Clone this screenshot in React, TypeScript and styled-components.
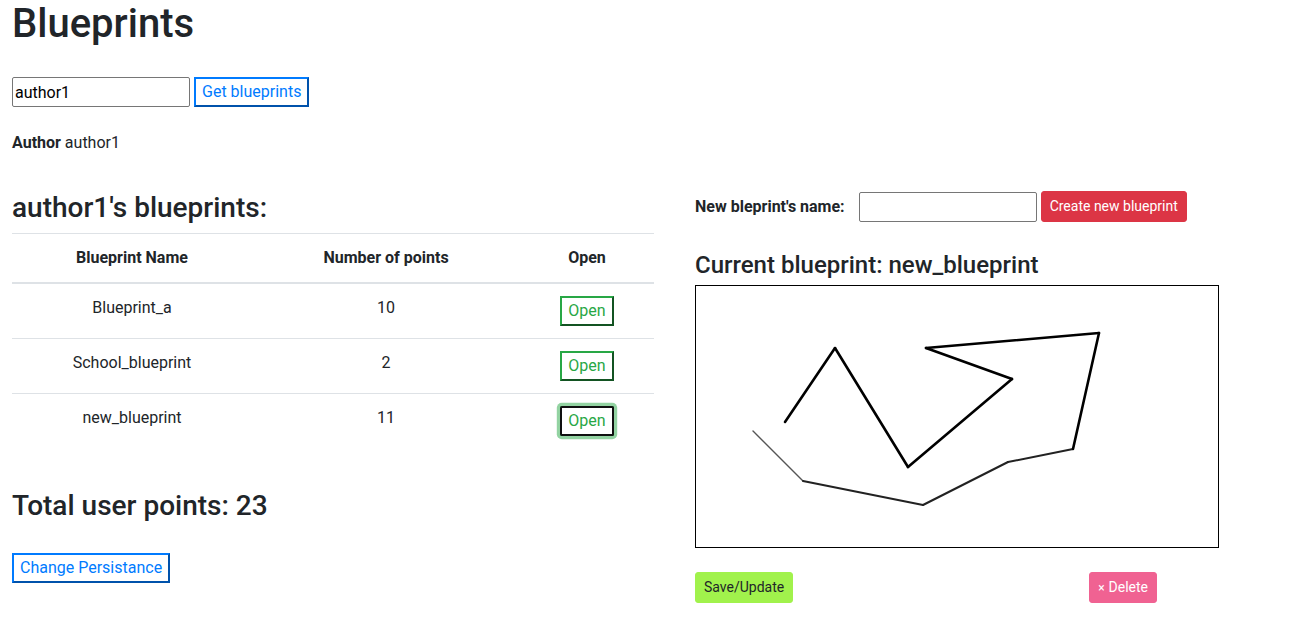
import styled, { createGlobalStyle } from "styled-components";

const GlobalStyle = createGlobalStyle`
    body {
        margin: 0;
        font-family: "Segoe UI", Roboto, "Noto Sans", sans-serif;
        font-size: 16px;
        line-height: 1.5;
        color: #212529;
        background: #fff;
    }
    * { box-sizing: border-box; }
`;

const Page = styled.div`
    padding: 0 12px;
`;

const Title = styled.h1`
    margin: 0 0 8px 0;
    font-size: 40px;
    font-weight: 500;
    line-height: 1.2;
`;

const InlineForm = styled.div<{ top?: number }>`
    display: flex;
    align-items: center;
    gap: 4px;
    margin-top: ${(p) => p.top ?? 0}px;
`;

const TextInput = styled.input`
    width: 178px;
    height: 30px;
    padding: 1px 2px;
    border: 1px solid #767676;
    border-radius: 2px;
    font: inherit;
    color: #000;
    background: #fff;
`;

const OutlineButton = styled.button<{ tone: string; focused?: boolean }>`
    height: 30px;
    padding: 1px 6px;
    font: inherit;
    line-height: 24px;
    color: ${(p) => p.tone};
    background: #fff;
    border: 2px outset ${(p) => p.tone};
    cursor: pointer;
    ${(p) =>
        p.focused &&
        `
        outline: 2px solid #101010;
        outline-offset: -2px;
        border-radius: 2px;
        box-shadow: 0 0 0 3.2px rgba(40, 167, 69, 0.5);
    `}
`;

const AuthorLine = styled.p`
    margin: 24px 0 0 0;
`;

const Columns = styled.div`
    display: grid;
    grid-template-columns: 642px 1fr;
    column-gap: 41px;
    margin-top: 36px;
`;

const Column = styled.div`
    display: flex;
    flex-direction: column;
    align-items: flex-start;
`;

const Heading3 = styled.h3<{ top?: number }>`
    margin: ${(p) => p.top ?? 0}px 0 8px 0;
    font-size: 28px;
    font-weight: 500;
    line-height: 1.2;
`;

const Heading4 = styled.h4`
    margin: 29px 0 5px 0;
    font-size: 24px;
    font-weight: 500;
    line-height: 1.2;
`;

const Table = styled.table`
    width: 642px;
    border-collapse: collapse;
    margin-bottom: 16px;
    table-layout: fixed;
`;

const Th = styled.th<{ w: number }>`
    width: ${(p) => p.w}px;
    padding: 12px;
    text-align: center;
    font-weight: 700;
    vertical-align: bottom;
    border-top: 1px solid #dee2e6;
    border-bottom: 2px solid #dee2e6;
`;

const Td = styled.td<{ first?: boolean }>`
    padding: 12px;
    text-align: center;
    vertical-align: top;
    border-top: ${(p) => (p.first ? "none" : "1px solid #dee2e6")};
`;

const Label = styled.label`
    font-weight: 700;
    margin-right: 10px;
`;

const SmallButton = styled.button<{ bg: string; fg: string }>`
    padding: 4px 8px;
    font: inherit;
    font-size: 14px;
    line-height: 1.5;
    color: ${(p) => p.fg};
    background: ${(p) => p.bg};
    border: 1px solid ${(p) => p.bg};
    border-radius: 3px;
    cursor: pointer;
`;

const Canvas = styled.div`
    width: 524px;
    height: 263px;
    border: 1px solid #000;
    background: #fff;
`;

const ActionRow = styled.div`
    display: flex;
    gap: 296px;
    margin-top: 24px;
`;

const Times = styled.span`
    font-size: 12px;
    margin-right: 4px;
`;

const rows = [
    { name: "Blueprint_a", points: 10 },
    { name: "School_blueprint", points: 2 },
    { name: "new_blueprint", points: 11 },
];

const pts: [number, number][] = [
    [57, 145], [107, 195], [227, 219], [312, 176], [377, 163], [403, 47],
    [230, 62], [316, 93], [212, 181], [139, 62], [89, 136],
];

function Drawing() {
    return (
        <svg width="522" height="261" viewBox="0 0 522 261">
            {pts.slice(1).map((p, i) => {
                const a = pts[i];
                const w = i === 0 ? 1.4 : i < 4 ? 2 : 2.6;
                const c = i === 0 ? "#555" : i < 4 ? "#222" : "#000";
                return (
                    <line key={i} x1={a[0]} y1={a[1]} x2={p[0]} y2={p[1]}
                        stroke={c} strokeWidth={w} strokeLinecap="round" />
                );
            })}
        </svg>
    );
}

export default function App() {
    return (
        <Page>
            <GlobalStyle />
            <Title>Blueprints</Title>
            <InlineForm top={29}>
                <TextInput defaultValue="author1" />
                <OutlineButton tone="#007bff">Get blueprints</OutlineButton>
            </InlineForm>
            <AuthorLine>
                <b>Author</b> author1
            </AuthorLine>
            <Columns>
                <Column>
                    <Heading3>author1's blueprints:</Heading3>
                    <Table>
                        <thead>
                            <tr>
                                <Th w={240}>Blueprint Name</Th>
                                <Th w={268}>Number of points</Th>
                                <Th w={134}>Open</Th>
                            </tr>
                        </thead>
                        <tbody>
                            {rows.map((r, i) => (
                                <tr key={r.name}>
                                    <Td first={i === 0}>{r.name}</Td>
                                    <Td first={i === 0}>{r.points}</Td>
                                    <Td first={i === 0}>
                                        <OutlineButton tone="#28a745" focused={i === 2}>
                                            Open
                                        </OutlineButton>
                                    </Td>
                                </tr>
                            ))}
                        </tbody>
                    </Table>
                    <Heading3 top={25}>Total user points: 23</Heading3>
                    <InlineForm top={23}>
                        <OutlineButton tone="#007bff">Change Persistance</OutlineButton>
                    </InlineForm>
                </Column>
                <Column>
                    <InlineForm>
                        <Label>New bleprint's name:</Label>
                        <TextInput />
                        <SmallButton bg="#dc3545" fg="#fff">Create new blueprint</SmallButton>
                    </InlineForm>
                    <Heading4>Current blueprint: new_blueprint</Heading4>
                    <Canvas>
                        <Drawing />
                    </Canvas>
                    <ActionRow>
                        <SmallButton bg="#a1f24c" fg="#212529">Save/Update</SmallButton>
                        <SmallButton bg="#f06292" fg="#fff">
                            <Times>×</Times>Delete
                        </SmallButton>
                    </ActionRow>
                </Column>
            </Columns>
        </Page>
    );
}
